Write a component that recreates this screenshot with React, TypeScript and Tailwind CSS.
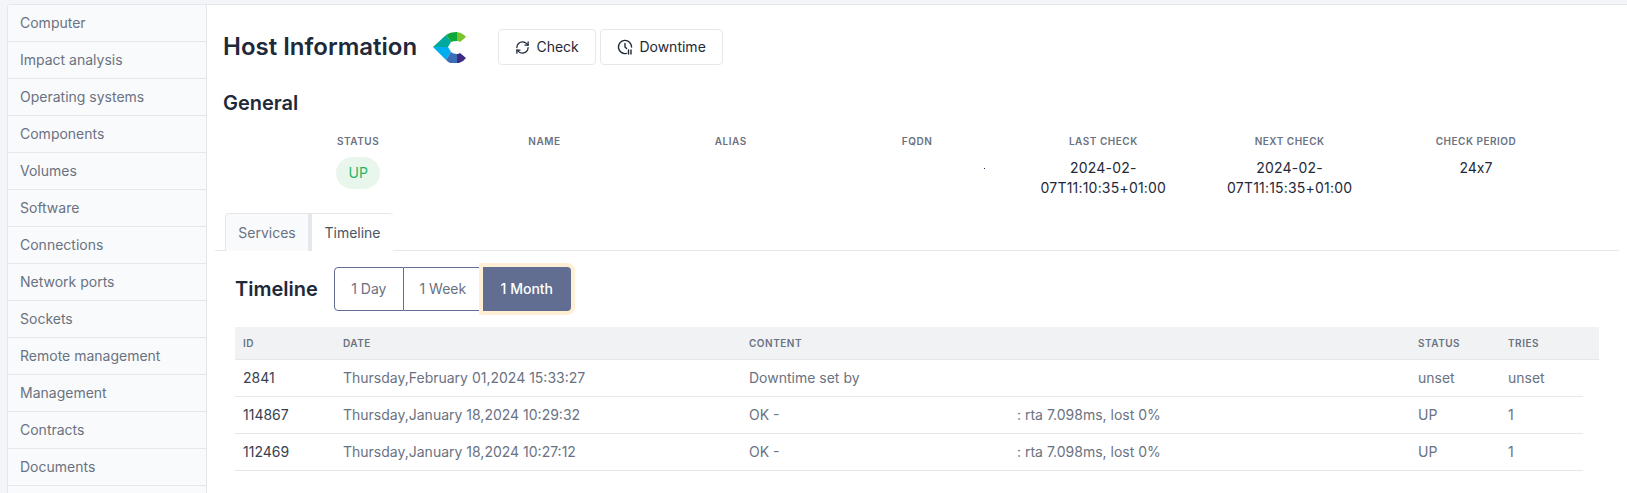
import { RefreshCw } from "lucide-react";

const menu = [
  "Computer",
  "Impact analysis",
  "Operating systems",
  "Components",
  "Volumes",
  "Software",
  "Connections",
  "Network ports",
  "Sockets",
  "Remote management",
  "Management",
  "Contracts",
  "Documents",
];

const rows = [
  { id: "2841", date: "Thursday,February 01,2024 15:33:27", content: "Downtime set by", extra: "", status: "unset", tries: "unset" },
  { id: "114867", date: "Thursday,January 18,2024 10:29:32", content: "OK -", extra: ": rta 7.098ms, lost 0%", status: "UP", tries: "1" },
  { id: "112469", date: "Thursday,January 18,2024 10:27:12", content: "OK -", extra: ": rta 7.098ms, lost 0%", status: "UP", tries: "1" },
];

function Logo() {
  return (
    <svg width="33" height="31" viewBox="0 0 33 31">
      <path d="M0 15 L13 3 L18 10 L15 15 Z" fill="#00a99d" />
      <path d="M13 3 Q17 0 24 0 L24 9 Q20 9 18 10 Z" fill="#0fa83c" />
      <path d="M24 0 Q30 1 33 5 L27 10 Q26 9 24 9 Z" fill="#7ac52b" />
      <path d="M0 15 L15 15 L18 20 L13 28 Z" fill="#00aeef" />
      <path d="M18 20 Q20 22 24 22 L24 31 L17 31 Q15 30 13 28 Z" fill="#3a6fb7" />
      <path d="M24 22 Q26 22 27 21 L33 26 Q30 30 26 31 L24 31 Z" fill="#3c2a85" />
    </svg>
  );
}

function DowntimeIcon() {
  return (
    <svg width="16" height="16" viewBox="0 0 16 16" fill="none" stroke="#1f2937" strokeWidth="1.4" strokeLinecap="round">
      <path d="M9.5 14.4 A6.6 6.6 0 1 1 14.6 8" />
      <path d="M8 4.5 V8 L9.6 9.6" />
      <path d="M11.5 11 V15 M14 11 V15" />
    </svg>
  );
}

function ToolbarButton({ icon, label, className }: { icon: React.ReactNode; label: string; className: string }) {
  return (
    <button className={`flex h-9 items-center justify-center gap-1.5 rounded border border-gray-200 bg-white text-sm text-gray-800 ${className}`}>
      {icon}
      {label}
    </button>
  );
}

function InfoColumn({ label, children }: { label: string; children?: React.ReactNode }) {
  return (
    <div className="w-[186.3px]">
      <div className="text-[10px] leading-4 font-semibold tracking-[0.05em] text-gray-500">{label}</div>
      <div className="mt-2 text-sm leading-5 text-gray-800 [font-feature-settings:'calt'_0]">{children}</div>
    </div>
  );
}

export default function App() {
  return (
    <div className="h-[493px] overflow-hidden bg-[#f4f5f9] pl-[7px] pt-1 font-['Inter',sans-serif]">
      <div className="flex h-full rounded-tl border-t border-l border-gray-200 bg-white">
        {/* Sidebar */}
        <div className="w-[199px] shrink-0 border-r border-gray-200 bg-[#f9fafb]">
          {menu.map((item) => (
            <div key={item} className="flex h-[37px] items-center border-b border-gray-200 pl-3 text-sm text-gray-500">
              {item}
            </div>
          ))}
        </div>

        {/* Main Content */}
        <div className="min-w-0 flex-1">
          <div className="flex h-[84px] items-center pl-4">
            <h1 className="text-2xl font-semibold text-gray-800">Host Information</h1>
            <div className="ml-4">
              <Logo />
            </div>
            <div className="ml-8 flex gap-1">
              <ToolbarButton icon={<RefreshCw size={15} />} label="Check" className="w-[98px]" />
              <ToolbarButton icon={<DowntimeIcon />} label="Downtime" className="w-[123px]" />
            </div>
          </div>

          <h2 className="pl-4 text-xl font-semibold text-gray-800">General</h2>

          {/* General info */}
          <div className="mt-4 flex pl-[58px] text-center">
            <InfoColumn label="STATUS">
              <span className="inline-block rounded-2xl bg-[#e9f6ec] px-3 py-1.5 text-sm text-[#28b463]">UP</span>
            </InfoColumn>
            <InfoColumn label="NAME" />
            <InfoColumn label="ALIAS" />
            <InfoColumn label="FQDN">
              <div className="ml-[160px] h-[18px] w-px pt-[11px]">
                <div className="h-px w-px bg-[#1e2a5a]"></div>
              </div>
            </InfoColumn>
            <InfoColumn label="LAST CHECK">
              <div className="pt-px tracking-[0.2px]">
                2024-02-
                <br />
                07T11:10:35+01:00
              </div>
            </InfoColumn>
            <InfoColumn label="NEXT CHECK">
              <div className="pt-px tracking-[0.2px]">
                2024-02-
                <br />
                07T11:15:35+01:00
              </div>
            </InfoColumn>
            <InfoColumn label="CHECK PERIOD">
              <div className="pt-px">24x7</div>
            </InfoColumn>
          </div>

          {/* Tabs */}
          <div className="mt-[15px] mr-2 ml-2 flex h-[38px] border-b border-gray-200 pl-2.5">
            <div className="flex h-[38px] w-[87px] items-center justify-center rounded-tl border-t border-l border-r-4 border-gray-200 bg-[#f9fafb] text-sm text-gray-500">
              Services
            </div>
            <div className="flex h-[38px] w-[81px] items-center justify-center rounded-tr border-t border-gray-200 bg-white text-sm text-gray-600">
              Timeline
            </div>
          </div>

          {/* Timeline */}
          <div className="pl-7">
            <div className="mt-4 flex items-center">
              <h2 className="text-xl font-semibold text-gray-800">Timeline</h2>
              <div className="ml-4 flex h-[44px] text-sm">
                <div className="flex w-[70px] items-center justify-center rounded-l border border-[#616e91] text-gray-500">1 Day</div>
                <div className="flex w-[79px] items-center justify-center border-y border-r border-[#616e91] text-gray-500">1 Week</div>
                <div className="flex w-[88px] items-center justify-center rounded-r bg-[#616e91] font-medium text-white ring-4 ring-[#feefd5]">1 Month</div>
              </div>
            </div>

            <div className="mt-4 w-[1364px]">
              <div className="grid h-[33px] grid-cols-[108px_406px_268px_401px_90px_91px] items-center border-b border-gray-200 bg-[#f1f2f4] text-[10px] font-semibold tracking-[0.05em] text-gray-500">
                <div className="pl-2">ID</div>
                <div>DATE</div>
                <div>CONTENT</div>
                <div></div>
                <div>STATUS</div>
                <div>TRIES</div>
              </div>
              {rows.map((row) => (
                <div key={row.id} className="grid h-[37px] w-[1348px] grid-cols-[108px_406px_268px_401px_90px_75px] items-center border-b border-gray-200 text-sm text-gray-500">
                  <div className="pl-2 text-gray-700">{row.id}</div>
                  <div>{row.date}</div>
                  <div>{row.content}</div>
                  <div>{row.extra}</div>
                  <div>{row.status}</div>
                  <div>{row.tries}</div>
                </div>
              ))}
            </div>
          </div>
        </div>
      </div>
    </div>
  );
}
